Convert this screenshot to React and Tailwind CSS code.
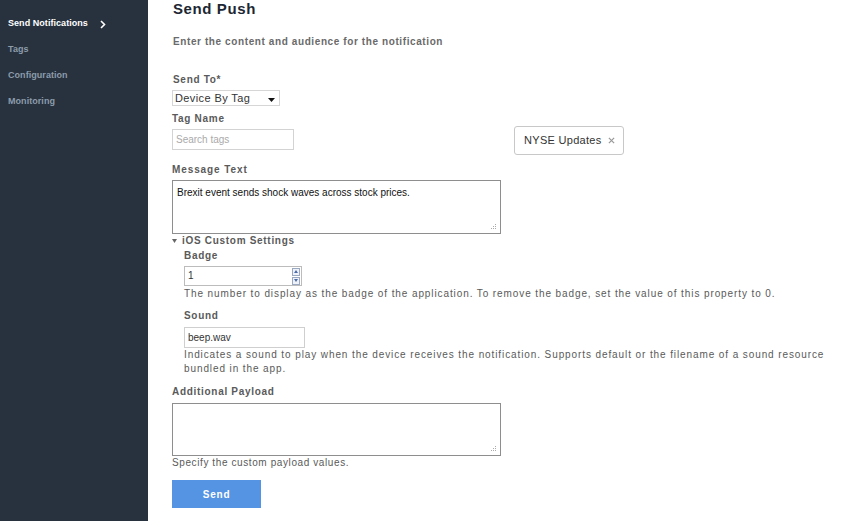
import React from 'react';

const navItems = ['Send Notifications', 'Tags', 'Configuration', 'Monitoring'];

const Label = ({ children, className = '' }) => (
  <div className={`text-[10px] font-bold tracking-[0.7px] text-[#5a5a5a] leading-[12px] ${className}`}>{children}</div>
);

const Resize = () => (
  <svg className="absolute right-[3px] bottom-[3px]" width="7" height="7" viewBox="0 0 7 7">
    <rect x="5" y="1" width="1" height="1" fill="#aaa" />
    <rect x="3" y="3" width="1" height="1" fill="#aaa" />
    <rect x="5" y="3" width="1" height="1" fill="#aaa" />
    <rect x="1" y="5" width="1" height="1" fill="#aaa" />
    <rect x="3" y="5" width="1" height="1" fill="#aaa" />
    <rect x="5" y="5" width="1" height="1" fill="#aaa" />
  </svg>
);

export default function App() {
  return (
    <div className="flex w-[842px] h-[521px] bg-white overflow-hidden" style={{ fontFamily: '"Liberation Sans", Arial, sans-serif' }}>
      {/* Sidebar */}
      <aside className="w-[148px] shrink-0 bg-[#27323e] pt-[11px]">
        {navItems.map((item, i) => (
          <div
            key={item}
            className={`flex items-center h-[26px] pl-[8px] text-[9px] font-bold tracking-[0.05px] ${i === 0 ? 'text-white' : 'text-[#8d9cab]'}`}
          >
            <span>{item}</span>
            {i === 0 && (
              <svg className="ml-[12px]" width="6" height="9" viewBox="0 0 6 9">
                <path d="M1 1l3.5 3.5L1 8" stroke="#fff" strokeWidth="1.6" fill="none" />
              </svg>
            )}
          </div>
        ))}
      </aside>

      {/* Main */}
      <main className="flex-1 pl-[24px]">
        <h1 className="text-[15px] font-bold tracking-[0.6px] text-[#1c2733] leading-[18px] pl-[1px]">Send Push</h1>
        <div className="mt-[18px] text-[10px] font-bold tracking-[0.6px] text-[#6a6a6a] pl-[1px] leading-[12px]">
          Enter the content and audience for the notification
        </div>

        <Label className="mt-[26px] pl-[1px]">Send To*</Label>
        <div className="mt-[4px] w-[108px] h-[16px] border border-[#d6d6d6] flex items-center justify-between pl-[2px] pr-[4px]">
          <span className="text-[11px] tracking-[0.4px] text-[#333] leading-[13px]">Device By Tag</span>
          <svg className="mt-[3px]" width="7" height="4" viewBox="0 0 7 4"><path d="M0 0h7L3.5 4z" fill="#111" /></svg>
        </div>

        <div className="flex items-start">
          <div>
            <Label className="mt-[7px]">Tag Name</Label>
            <div className="mt-[4px] w-[122px] h-[21px] border border-[#d3d3d3] flex items-center pl-[3px]">
              <span className="text-[10px] text-[#aaa] leading-[12px]">Search tags</span>
            </div>
          </div>
          <div className="ml-[220px] mt-[20px] h-[29px] w-[110px] border border-[#c8c8c8] rounded-[3px] flex items-center pl-[9px] gap-[6px]">
            <span className="text-[11px] tracking-[0.3px] text-[#333]">NYSE Updates</span>
            <svg width="7" height="7" viewBox="0 0 8 8"><path d="M1 1l6 6M7 1L1 7" stroke="#999" strokeWidth="1.4" /></svg>
          </div>
        </div>

        <Label className="mt-[9px] tracking-[0.9px]">Message Text</Label>
        <div className="relative mt-[4px] w-[329px] h-[54px] border border-[#8e8e8e] px-[4px] pt-[6px] text-[10px] text-[#111] leading-[12px]">
          Brexit event sends shock waves across stock prices.
          <Resize />
        </div>

        <div className="flex items-center mt-[1px] h-[12px]">
          <svg width="5" height="4" viewBox="0 0 5 4"><path d="M0 0h5L2.5 4z" fill="#666" /></svg>
          <span className="ml-[5px] text-[10px] font-bold tracking-[0.7px] text-[#5a5a5a] leading-[12px]">iOS Custom Settings</span>
        </div>

        <div className="pl-[12px]">
          <Label className="mt-[3px]">Badge</Label>
          <div className="mt-[4px] w-[118px] h-[20px] border border-[#bcbcbc] flex items-center justify-between pl-[3px] pr-[1px]">
            <span className="text-[10px] text-[#333] leading-[12px]">1</span>
            <div className="flex flex-col gap-[1px]">
              <div className="w-[8px] h-[8px] border border-[#9aa8c0] bg-[#eef2f8] flex items-center justify-center">
                <svg width="4" height="3" viewBox="0 0 4 3"><path d="M2 0L4 3H0z" fill="#4a6aa8" /></svg>
              </div>
              <div className="w-[8px] h-[8px] border border-[#9aa8c0] bg-[#eef2f8] flex items-center justify-center">
                <svg width="4" height="3" viewBox="0 0 4 3"><path d="M0 0h4L2 3z" fill="#4a6aa8" /></svg>
              </div>
            </div>
          </div>
          <div className="mt-[1px] text-[10px] tracking-[0.9px] text-[#5a5a5a] leading-[14px]">
            The number to display as the badge of the application. To remove the badge, set the value of this property to 0.
          </div>

          <Label className="mt-[9px]">Sound</Label>
          <div className="mt-[5px] w-[121px] h-[21px] border border-[#cfcfcf] flex items-center pl-[3px]">
            <span className="text-[10px] text-[#333] leading-[12px]">beep.wav</span>
          </div>
          <div className="text-[10px] tracking-[0.9px] text-[#5a5a5a] leading-[14px] w-[650px]">
            Indicates a sound to play when the device receives the notification. Supports default or the filename of a sound resource bundled in the app.
          </div>
        </div>

        <Label className="mt-[10px]">Additional Payload</Label>
        <div className="relative mt-[5px] w-[329px] h-[53px] border border-[#8e8e8e]">
          <Resize />
        </div>
        <div className="text-[10px] tracking-[0.6px] text-[#5a5a5a] leading-[14px]">Specify the custom payload values.</div>

        <button className="mt-[10px] w-[89px] h-[28px] bg-[#5594e3] text-white text-[10px] font-bold tracking-[0.8px]">
          Send
        </button>
      </main>
    </div>
  );
}
